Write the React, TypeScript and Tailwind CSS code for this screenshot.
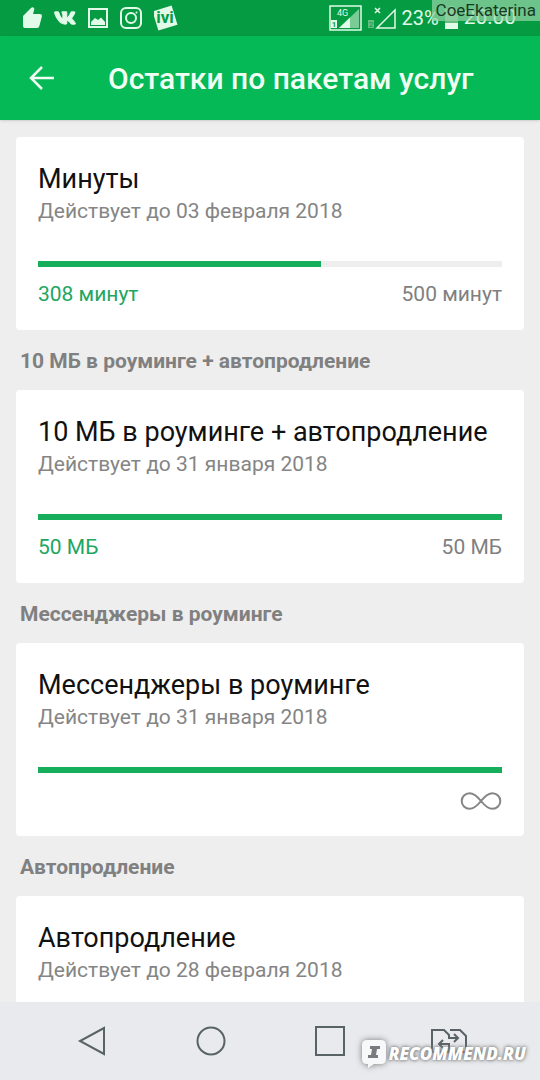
import type { ReactNode } from 'react';
import { FaVk } from 'react-icons/fa';

interface Package {
  section?: string;
  title: string;
  until: string;
  percent: number;
  left?: string;
  total: ReactNode;
}

function InfinityIcon() {
  return (
    <svg className="h-[18px] w-[42px]" viewBox="0 0 42 18" fill="none" stroke="#858585" strokeWidth="2" role="img" aria-label="Безлимит">
      <path d="M21 9C17 4 13.5 1.2 9.5 1.2A7.8 7.8 0 0 0 9.5 16.8C13.5 16.8 17 14 21 9S28.500 1.200 32.500 1.200A7.800 7.800 0 0 1 32.500 16.800C28.500 16.800 25 14 21 9Z" />
    </svg>
  );
}

const packages: Package[] = [
  {
    title: 'Минуты',
    until: 'Действует до 03 февраля 2018',
    percent: 61,
    left: '308 минут',
    total: '500 минут',
  },
  {
    section: '10 МБ в роуминге + автопродление',
    title: '10 МБ в роуминге + автопродление',
    until: 'Действует до 31 января 2018',
    percent: 100,
    left: '50 МБ',
    total: '50 МБ',
  },
  {
    section: 'Мессенджеры в роуминге',
    title: 'Мессенджеры в роуминге',
    until: 'Действует до 31 января 2018',
    percent: 100,
    total: <InfinityIcon />,
  },
  {
    section: 'Автопродление',
    title: 'Автопродление',
    until: 'Действует до 28 февраля 2018',
    percent: 100,
    total: <InfinityIcon />,
  },
];

function StatusBar() {
  return (
    <div className="flex h-9 shrink-0 items-center justify-between bg-[#049b43] pr-6 pl-[22px] text-[#e2fbe9]">
      <div className="flex items-center gap-3">
        <svg className="h-[22px] w-5" viewBox="0 0 20 22" fill="currentColor">
          <path d="M1 9L9 1Q10.500 -0.500 12 1Q12.500 2 12 3.500L11 7H18Q20 7 20 9L17.500 18.500Q17 21 15 21H3Q1 21 1 19Z" />
        </svg>
        <FaVk className="h-6 w-[22px]" stroke="currentColor" strokeWidth="28" />
        <svg className="h-5 w-5" viewBox="0 0 20 20">
          <rect x="1" y="1" width="18" height="18" fill="none" stroke="currentColor" strokeWidth="2" />
          <path d="M3 17V14L7 10L10 12L13 9.500L17 14V17Z" fill="currentColor" />
        </svg>
        <svg className="h-[22px] w-[22px]" viewBox="0 0 22 22" fill="none" stroke="currentColor" strokeWidth="2">
          <rect x="1" y="1" width="20" height="20" rx="5" />
          <circle cx="11" cy="11" r="5" />
          <circle cx="16.500" cy="5.500" r="1" fill="currentColor" stroke="none" />
        </svg>
        <svg className="h-[26px] w-[26px]" viewBox="0 0 26 26">
          <rect x="1" y="3" width="20" height="20" fill="currentColor" transform="rotate(-17 11 13)" />
          <text x="11" y="18" textAnchor="middle" fill="#049b43" fontFamily="Roboto, sans-serif" fontSize="17" fontWeight="700">
            ivi
          </text>
        </svg>
      </div>
      <div className="flex items-center gap-[6px]">
        <svg className="h-[26px] w-[33px]" viewBox="0 0 33 26">
          <rect x="1" y="1" width="31" height="24" fill="none" stroke="currentColor" strokeWidth="1.500" />
          <path d="M10 23L30 4V23Z" fill="#7bcb94" />
          <path d="M10 23L21 12.500V23Z" fill="currentColor" />
          <rect x="2" y="15" width="6" height="8" fill="currentColor" />
          <text x="5" y="22" textAnchor="middle" fill="#049b43" fontFamily="Roboto, sans-serif" fontSize="8" fontWeight="700">1</text>
          <text x="8" y="11" fill="currentColor" fontFamily="Roboto, sans-serif" fontSize="9">4G</text>
        </svg>
        <svg className="h-6 w-7" viewBox="0 0 28 24" fill="none" stroke="currentColor">
          <path d="M7 2L12 7M12 2L7 7" strokeWidth="1.500" />
          <path d="M9 22L27 4V22Z" strokeWidth="1.500" />
          <rect x="0" y="14" width="6" height="8" fill="#66bd80" stroke="none" />
          <text x="3" y="21" textAnchor="middle" fill="#049b43" stroke="none" fontFamily="Roboto, sans-serif" fontSize="8">2</text>
        </svg>
        <span className="text-xl">23%</span>
        <svg className="h-6 w-[13px]" viewBox="0 0 13 24">
          <path d="M4 0H9V3H13V17H0V3H4Z" fill="#66bd80" />
          <path d="M0 17H13V23H0Z" fill="currentColor" />
        </svg>
        <span className="text-[21px]">20:00</span>
      </div>
    </div>
  );
}

function PackageCard({ item }: { item: Package }) {
  return (
    <section>
      {item.section && (
        <h2 className="flex h-[60px] items-center px-1 pt-1 text-[21px] font-bold text-[#808080]">{item.section}</h2>
      )}
      <div className="rounded bg-white px-[22px] pt-6 pb-[15px]">
        <h3 className="text-[27px] leading-9 text-[#111111]">{item.title}</h3>
        <p className="text-[21px] leading-7 text-[#858585]">{item.until}</p>
        <div
          className="mt-9 h-[6px] bg-[#eeeeee]"
          role="progressbar"
          aria-label={item.title}
          aria-valuenow={item.percent}
        >
          <div className="h-full bg-[#16ad5b]" style={{ width: `${item.percent}%` }} />
        </div>
        <div className="mt-2 flex h-10 items-center justify-between text-[21px]">
          <span className="text-[#20a662]">{item.left}</span>
          <span className="text-[#808080]">{item.total}</span>
        </div>
      </div>
    </section>
  );
}

function NavBar() {
  return (
    <nav className="grid h-[78px] shrink-0 grid-cols-4 bg-[#e8eaed] px-8 text-[#596367]">
      <button className="flex items-center justify-center" aria-label="Назад">
        <svg className="h-[30px] w-[30px]" viewBox="0 0 30 30" fill="none" stroke="currentColor" strokeWidth="2">
          <path d="M27 2V28L3 15Z" />
        </svg>
      </button>
      <button className="flex items-center justify-center" aria-label="Домой">
        <svg className="h-[30px] w-[30px]" viewBox="0 0 30 30" fill="none" stroke="currentColor" strokeWidth="2">
          <circle cx="15" cy="15" r="13.500" />
        </svg>
      </button>
      <button className="flex items-center justify-center" aria-label="Недавние">
        <svg className="h-[30px] w-[30px]" viewBox="0 0 30 30" fill="none" stroke="currentColor" strokeWidth="2">
          <rect x="1" y="1" width="28" height="28" />
        </svg>
      </button>
      <button className="flex items-center justify-center" aria-label="Сменить SIM">
        <svg className="h-6 w-9" viewBox="0 0 36 24" fill="none" stroke="currentColor" strokeWidth="2">
          <path d="M27 9H18V6L13 1H1V23H18V15H9M12 11L8 15L12 19" />
          <path d="M19 1H29L35 7V23H18M23 5L27 9L23 13" />
        </svg>
      </button>
    </nav>
  );
}

export default function App() {
  return (
    <div className="relative flex h-screen flex-col overflow-hidden bg-[#eeeeee] font-['Roboto',sans-serif]">
      <StatusBar />
      <header className="z-10 flex h-[84px] shrink-0 items-center bg-[#05b956] px-7 text-[#effff4] shadow">
        <button aria-label="Назад">
          <svg className="h-[26px] w-[26px]" viewBox="0 0 26 26" fill="none" stroke="currentColor" strokeWidth="2.500">
            <path d="M26 13H4M14 2L3 13L14 24" />
          </svg>
        </button>
        <h1 className="ml-[54px] text-[30px] font-medium">Остатки по пакетам услуг</h1>
      </header>
      <main className="min-h-0 flex-1 overflow-y-auto px-4 pt-[17px] [scrollbar-width:none]">
        {packages.map((item) => (
          <PackageCard key={item.title} item={item} />
        ))}
      </main>
      <NavBar />

      <div className="absolute top-0 right-0 z-20 flex h-[21px] items-center bg-[#9ad6aa]/70 px-1 text-[17px] text-[#173b24]">
        CoeEkaterina
      </div>
      <div className="absolute right-[14px] bottom-3 z-20 flex items-center gap-[2px] font-['Open_Sans',sans-serif] text-white">
        <svg className="h-7 w-6 drop-shadow-[0_0_3px_#777777]" viewBox="0 0 24 28">
          <path d="M5 0H19Q24 0 24 5V19Q24 24 19 24H12L6 28V24H5Q0 24 0 19V5Q0 0 5 0Z" fill="#f7f8f9" />
          <path d="M8 6H18V9H15L14 15H16V18H6V15H9L10 9H8Z" fill="#777b80" />
        </svg>
        <span className="text-[17px] leading-6 font-extrabold italic [text-shadow:0_0_3px_#777777,0_0_5px_#888888]">
          RECOMMEND.RU
        </span>
      </div>
    </div>
  );
}
